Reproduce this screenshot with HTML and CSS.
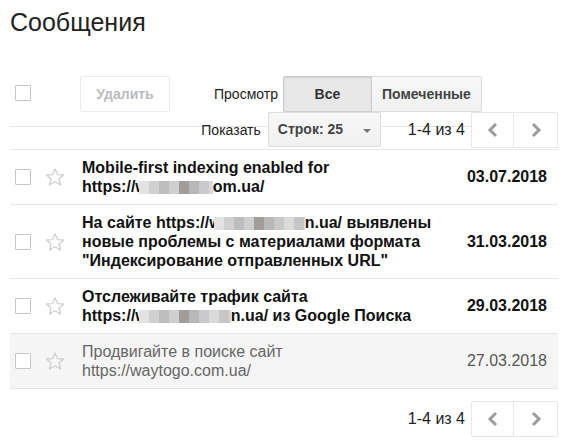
FILE: index.html
```html
<!DOCTYPE html>
<html lang="ru">
<head>
    <meta charset="UTF-8">
    <meta name="viewport" content="width=device-width, initial-scale=1.0">
    <title>Сообщения</title>
    <link rel="stylesheet" href="styles.css">
</head>
<body>
    <div class="page">
        <h1 class="title">Сообщения</h1>

        <div class="toolbar">
            <span class="checkbox"></span>
            <button class="btn btn-delete">Удалить</button>
            <span class="label label-view">Просмотр</span>
            <div class="segmented">
                <button class="seg seg-all active">Все</button>
                <button class="seg seg-starred">Помеченные</button>
            </div>
        </div>

        <div class="toolbar-sub">
            <span class="label label-show">Показать</span>
            <div class="select">Строк: 25<span class="caret"></span></div>
            <span class="count">1-4 из 4</span>
            <div class="pager">
                <button class="page-btn"><svg width="12" height="16" viewBox="0 0 12 16"><polyline points="9,2 3,8 9,14" /></svg></button>
                <button class="page-btn"><svg width="12" height="16" viewBox="0 0 12 16"><polyline points="3,2 9,8 3,14" /></svg></button>
            </div>
        </div>

        <div class="messages">
            <div class="msg unread">
                <span class="checkbox"></span>
                <svg class="star" width="20" height="18" viewBox="0 0 20 18"><polygon points="10,1 12.5,6.6 18.6,7 14,11 15.5,17 10,13.8 4.5,17 6,11 1.4,7 7.5,6.6" /></svg>
                <div class="msg-text">
                    <span class="line">Mobile-first indexing enabled for</span>
                    <span class="line">https://w<span class="blur blur-a"></span>om.ua/</span>
                </div>
                <div class="msg-date">03.07.2018</div>
            </div>
            <div class="msg unread">
                <span class="checkbox"></span>
                <svg class="star" width="20" height="18" viewBox="0 0 20 18"><polygon points="10,1 12.5,6.6 18.6,7 14,11 15.5,17 10,13.8 4.5,17 6,11 1.4,7 7.5,6.6" /></svg>
                <div class="msg-text">
                    <span class="line">На сайте https://w<span class="blur blur-b"></span>n.ua/ выявлены</span>
                    <span class="line">новые проблемы с материалами формата</span>
                    <span class="line">"Индексирование отправленных URL"</span>
                </div>
                <div class="msg-date">31.03.2018</div>
            </div>
            <div class="msg unread">
                <span class="checkbox"></span>
                <svg class="star" width="20" height="18" viewBox="0 0 20 18"><polygon points="10,1 12.5,6.6 18.6,7 14,11 15.5,17 10,13.8 4.5,17 6,11 1.4,7 7.5,6.6" /></svg>
                <div class="msg-text">
                    <span class="line">Отслеживайте трафик сайта</span>
                    <span class="line">https://w<span class="blur blur-c"></span>n.ua/ из Google Поиска</span>
                </div>
                <div class="msg-date">29.03.2018</div>
            </div>
            <div class="msg read">
                <span class="checkbox"></span>
                <svg class="star" width="20" height="18" viewBox="0 0 20 18"><polygon points="10,1 12.5,6.6 18.6,7 14,11 15.5,17 10,13.8 4.5,17 6,11 1.4,7 7.5,6.6" /></svg>
                <div class="msg-text">
                    <span class="line">Продвигайте в поиске сайт</span>
                    <span class="line">https://waytogo.com.ua/</span>
                </div>
                <div class="msg-date">27.03.2018</div>
            </div>
        </div>

        <div class="footer">
            <span class="count">1-4 из 4</span>
            <div class="pager">
                <button class="page-btn"><svg width="12" height="16" viewBox="0 0 12 16"><polyline points="9,2 3,8 9,14" /></svg></button>
                <button class="page-btn"><svg width="12" height="16" viewBox="0 0 12 16"><polyline points="3,2 9,8 3,14" /></svg></button>
            </div>
        </div>
    </div>
</body>
</html>
```

FILE: styles.css
```css
body {
    font-family: "Liberation Sans", Arial, sans-serif;
    background-color: #fff;
    color: #222;
    margin: 0;
    padding: 0;
}
.page {
    width: 548px;
    margin-left: 10px;
}
.title {
    margin: 7px 0 0;
    font-size: 25px;
    line-height: 30px;
    font-weight: normal;
    color: #222;
}
button {
    font-family: inherit;
    margin: 0;
    cursor: pointer;
}
.checkbox {
    display: block;
    width: 14px;
    height: 14px;
    border: 1px solid #c6c6c6;
    border-radius: 1px;
    background-color: #fff;
    flex: none;
}
.toolbar {
    display: flex;
    align-items: flex-start;
    height: 50px;
    margin-top: 39px;
    border-bottom: 1px solid #e5e5e5;
}
.toolbar .checkbox {
    margin: 9px 0 0 5px;
}
.btn-delete {
    width: 90px;
    height: 36px;
    margin-left: 49px;
    background-color: #fff;
    border: 1px solid #ebebeb;
    border-radius: 2px;
    color: #bbb;
    font-size: 14px;
    font-weight: bold;
}
.label {
    font-size: 14px;
    line-height: 36px;
    color: #222;
}
.label-view {
    margin-left: 44px;
}
.segmented {
    display: flex;
    margin-left: 5px;
}
.seg {
    height: 36px;
    font-size: 14px;
    font-weight: bold;
    color: #444;
    border: 1px solid #dcdcdc;
    background: linear-gradient(#f8f8f8, #f1f1f1);
}
.seg-all {
    width: 89px;
    border-radius: 2px 0 0 2px;
}
.seg-starred {
    width: 110px;
    border-left: none;
    border-radius: 0 2px 2px 0;
}
.seg.active {
    background: #e8e8e8;
    border-color: #ccc;
    color: #333;
    box-shadow: inset 0 1px 2px rgba(0, 0, 0, 0.1);
}
.toolbar-sub {
    display: flex;
    justify-content: flex-end;
    align-items: flex-start;
    height: 37px;
    margin-top: -15px;
    border-bottom: 1px solid #e5e5e5;
}
.label-show {
    margin-right: 7px;
}
.select {
    position: relative;
    width: 113px;
    height: 35px;
    box-sizing: border-box;
    padding-left: 9px;
    line-height: 33px;
    font-size: 14px;
    font-weight: bold;
    color: #444;
    border: 1px solid #dcdcdc;
    border-radius: 2px;
    background: linear-gradient(#f8f8f8, #f1f1f1);
}
.caret {
    position: absolute;
    right: 9px;
    top: 16px;
    border-left: 4px solid transparent;
    border-right: 4px solid transparent;
    border-top: 4px solid #777;
}
.count {
    font-size: 16px;
    line-height: 36px;
    color: #222;
    margin-left: 27px;
    margin-right: 6px;
}
.pager {
    display: flex;
}
.page-btn {
    width: 44px;
    height: 36px;
    padding: 0;
    background-color: #fff;
    border: 1px solid #e6e6e6;
    display: flex;
    align-items: center;
    justify-content: center;
}
.page-btn:first-child {
    width: 43px;
    border-radius: 2px 0 0 2px;
}
.page-btn:last-child {
    border-left: none;
    border-radius: 0 2px 2px 0;
}
.page-btn polyline {
    fill: none;
    stroke: #9c9c9c;
    stroke-width: 3;
}
.msg {
    display: flex;
    align-items: center;
    padding: 8px 0;
    border-bottom: 1px solid #e5e5e5;
}
.msg .checkbox {
    margin-left: 5px;
}
.star {
    flex: none;
    margin-left: 14px;
}
.star polygon {
    fill: none;
    stroke: #cfcfcf;
    stroke-width: 1.3;
    stroke-linejoin: round;
}
.msg-text {
    flex: 1;
    margin-left: 17px;
    padding-right: 14px;
    font-size: 16px;
    line-height: 19px;
}
.line {
    display: block;
    white-space: nowrap;
}
.msg-date {
    flex: none;
    width: 89px;
    padding-right: 11px;
    text-align: right;
    font-size: 16px;
}
.unread .msg-text,
.unread .msg-date {
    font-weight: bold;
    color: #111;
}
.read {
    background-color: #f5f5f5;
}
.read .msg-text {
    color: #666;
}
.read .msg-date {
    color: #555;
}
.blur {
    display: inline-block;
    height: 13px;
    vertical-align: -2px;
    background: linear-gradient(90deg,
        #e2e2e2 0 10px, #d0d0d0 10px 20px, #bdbdbd 20px 30px,
        #cfcfcf 30px 40px, #a39d99 40px 50px, #b8b8b8 50px 60px,
        #c9c9cb 60px 70px, #dadada 70px 80px, #c6c6c6 80px 90px,
        #d8d8d8 90px 100px);
}
.blur-a {
    width: 74px;
    margin-left: -9px;
}
.blur-b {
    width: 91px;
    margin-left: -8px;
}
.blur-c {
    width: 92px;
    margin-left: -9px;
}
.footer {
    display: flex;
    justify-content: flex-end;
    margin-top: 12px;
}
```
